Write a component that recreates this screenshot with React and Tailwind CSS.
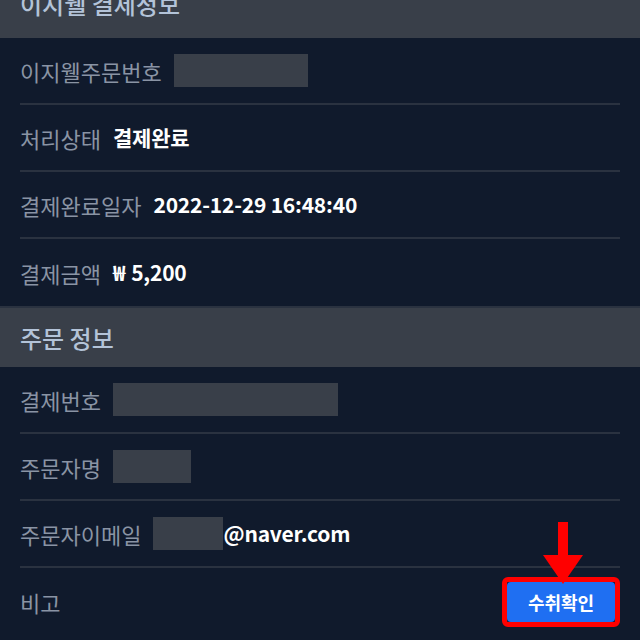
import React from 'react';

const font = { fontFamily: '"Noto Sans CJK KR", "Noto Sans", sans-serif' };

function Row({ label, children, last }) {
  return (
    <div className={`h-[67px] flex items-center gap-3 ${last ? '' : 'border-b-2 border-[#2a3240]'}`}>
      <span className="text-[22px] text-[#8a94a4] leading-none">{label}</span>
      {children}
    </div>
  );
}

function Header({ title, extra = '' }) {
  return (
    <div className={`h-[61px] px-5 flex items-center bg-[#393f49] text-[24px] font-medium text-[#b3c3d8] border-t-2 border-[#2a3240] ${extra}`}>
      {title}
    </div>
  );
}

const Blank = ({ w }) => <span className={`h-[33px] bg-[#393f49] ${w}`} />;
const Value = ({ children }) => <span className="text-[21px] font-bold text-white leading-none tracking-[-0.2px]">{children}</span>;

export default function App() {
  return (
    <div className="w-[640px] h-[640px] overflow-hidden bg-[#101a2c]" style={font}>
      <div className="-mt-[23px]">
        <Header title="이지웰 결제정보" extra="pb-[10px]" />
        <div className="px-5">
          <Row label="이지웰주문번호"><Blank w="w-[134px]" /></Row>
          <Row label="처리상태"><Value>결제완료</Value></Row>
          <Row label="결제완료일자"><Value>2022-12-29 16:48:40</Value></Row>
          <Row label="결제금액" last><Value>₩<span className="ml-[6px]">5,200</span></Value></Row>
        </div>
        <Header title="주문 정보" />
        <div className="px-5">
          <Row label="결제번호"><Blank w="w-[225px]" /></Row>
          <Row label="주문자명"><Blank w="w-[78px]" /></Row>
          <Row label="주문자이메일">
            <span className="flex items-center">
              <Blank w="w-[70px]" />
              <Value>@naver.com</Value>
            </span>
          </Row>
          <div className="h-[67px] flex items-center justify-between">
            <span className="text-[22px] text-[#8a94a4] leading-none">비고</span>
            <div className="relative">
              <button className="border-[5px] border-[#ff0000] rounded-md">
                <span className="block w-[108px] h-[40px] bg-[#1f6ff2] rounded-sm text-white font-bold text-[18px] leading-[40px]">수취확인</span>
              </button>
              <svg className="absolute left-[41px] -top-[55px]" width="40" height="62" viewBox="0 0 40 62">
                <rect x="15" y="0" width="10" height="34" fill="#ff0000" />
                <polygon points="0,33 40,33 20,62" fill="#ff0000" />
              </svg>
            </div>
          </div>
        </div>
      </div>
    </div>
  );
}
